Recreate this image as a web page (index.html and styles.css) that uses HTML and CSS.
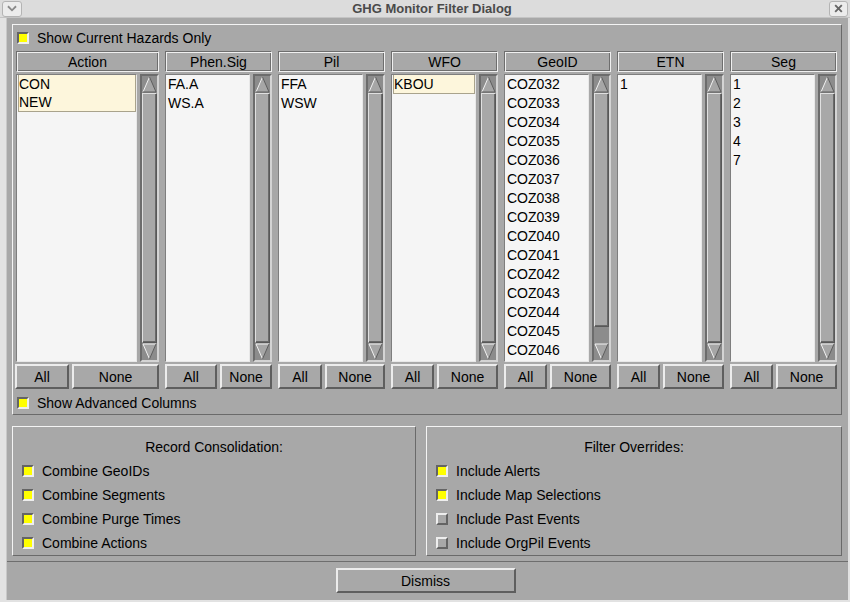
FILE: index.html
```html
<!DOCTYPE html>
<html>
<head>
<meta charset="utf-8">
<title>GHG Monitor Filter Dialog</title>
<link rel="stylesheet" href="styles.css">
</head>
<body>
<div class="win">
  <div class="titlebar">
    <div class="tbtn tleft"><svg width="20" height="15" viewBox="0 0 20 15"><polyline points="5.5,5 10,9.5 14.5,5" fill="none" stroke="#8a8a8a" stroke-width="2"/></svg></div>
    <div class="title">GHG Monitor Filter Dialog</div>
    <div class="tbtn tright"><svg width="18" height="15" viewBox="0 0 18 15"><path d="M5.5 4 L12.5 11 M12.5 4 L5.5 11" stroke="#666" stroke-width="2"/></svg></div>
  </div>
  <div class="body">
    <div class="main">
      <div class="frame topframe">
        <div class="chk"><span class="box on"></span><span>Show Current Hazards Only</span></div>
        <div class="cols">
          <div class="col wide">
            <div class="hdr">Action</div>
            <div class="lw">
              <div class="list">
                <div class="sel"><div class="row">CON</div><div class="row">NEW</div></div>
              </div>
              <div class="sb">
                <svg class="ar" width="15" height="17" viewBox="0 0 15 17"><polygon points="1,16 7.5,1 14,16" fill="#a6a6a6"/><line x1="1" y1="16" x2="7.5" y2="1" stroke="#f2f2f2"/><line x1="7.5" y1="1" x2="14" y2="16" stroke="#5e5e5e"/><line x1="1" y1="16" x2="14" y2="16" stroke="#5e5e5e"/></svg>
                <div class="thumb"></div>
                <svg class="ar" width="15" height="17" viewBox="0 0 15 17"><polygon points="1,1 14,1 7.5,16" fill="#a6a6a6"/><line x1="1" y1="1" x2="14" y2="1" stroke="#f2f2f2"/><line x1="1" y1="1" x2="7.5" y2="16" stroke="#f2f2f2"/><line x1="14" y1="1" x2="7.5" y2="16" stroke="#5e5e5e"/></svg>
              </div>
            </div>
            <div class="btns b1"><button class="btn">All</button><button class="btn">None</button></div>
          </div>
          <div class="col">
            <div class="hdr">Phen.Sig</div>
            <div class="lw">
              <div class="list"><div class="row">FA.A</div><div class="row">WS.A</div></div>
              <div class="sb">
                <svg class="ar" width="15" height="17" viewBox="0 0 15 17"><polygon points="1,16 7.5,1 14,16" fill="#a6a6a6"/><line x1="1" y1="16" x2="7.5" y2="1" stroke="#f2f2f2"/><line x1="7.5" y1="1" x2="14" y2="16" stroke="#5e5e5e"/><line x1="1" y1="16" x2="14" y2="16" stroke="#5e5e5e"/></svg>
                <div class="thumb"></div>
                <svg class="ar" width="15" height="17" viewBox="0 0 15 17"><polygon points="1,1 14,1 7.5,16" fill="#a6a6a6"/><line x1="1" y1="1" x2="14" y2="1" stroke="#f2f2f2"/><line x1="1" y1="1" x2="7.5" y2="16" stroke="#f2f2f2"/><line x1="14" y1="1" x2="7.5" y2="16" stroke="#5e5e5e"/></svg>
              </div>
            </div>
            <div class="btns b2"><button class="btn">All</button><button class="btn">None</button></div>
          </div>
          <div class="col">
            <div class="hdr">Pil</div>
            <div class="lw">
              <div class="list"><div class="row">FFA</div><div class="row">WSW</div></div>
              <div class="sb">
                <svg class="ar" width="15" height="17" viewBox="0 0 15 17"><polygon points="1,16 7.5,1 14,16" fill="#a6a6a6"/><line x1="1" y1="16" x2="7.5" y2="1" stroke="#f2f2f2"/><line x1="7.5" y1="1" x2="14" y2="16" stroke="#5e5e5e"/><line x1="1" y1="16" x2="14" y2="16" stroke="#5e5e5e"/></svg>
                <div class="thumb"></div>
                <svg class="ar" width="15" height="17" viewBox="0 0 15 17"><polygon points="1,1 14,1 7.5,16" fill="#a6a6a6"/><line x1="1" y1="1" x2="14" y2="1" stroke="#f2f2f2"/><line x1="1" y1="1" x2="7.5" y2="16" stroke="#f2f2f2"/><line x1="14" y1="1" x2="7.5" y2="16" stroke="#5e5e5e"/></svg>
              </div>
            </div>
            <div class="btns b3"><button class="btn">All</button><button class="btn">None</button></div>
          </div>
          <div class="col">
            <div class="hdr">WFO</div>
            <div class="lw">
              <div class="list"><div class="sel"><div class="row">KBOU</div></div></div>
              <div class="sb">
                <svg class="ar" width="15" height="17" viewBox="0 0 15 17"><polygon points="1,16 7.5,1 14,16" fill="#a6a6a6"/><line x1="1" y1="16" x2="7.5" y2="1" stroke="#f2f2f2"/><line x1="7.5" y1="1" x2="14" y2="16" stroke="#5e5e5e"/><line x1="1" y1="16" x2="14" y2="16" stroke="#5e5e5e"/></svg>
                <div class="thumb"></div>
                <svg class="ar" width="15" height="17" viewBox="0 0 15 17"><polygon points="1,1 14,1 7.5,16" fill="#a6a6a6"/><line x1="1" y1="1" x2="14" y2="1" stroke="#f2f2f2"/><line x1="1" y1="1" x2="7.5" y2="16" stroke="#f2f2f2"/><line x1="14" y1="1" x2="7.5" y2="16" stroke="#5e5e5e"/></svg>
              </div>
            </div>
            <div class="btns b4"><button class="btn">All</button><button class="btn">None</button></div>
          </div>
          <div class="col">
            <div class="hdr">GeoID</div>
            <div class="lw">
              <div class="list">
                <div class="row">COZ032</div><div class="row">COZ033</div><div class="row">COZ034</div>
                <div class="row">COZ035</div><div class="row">COZ036</div><div class="row">COZ037</div>
                <div class="row">COZ038</div><div class="row">COZ039</div><div class="row">COZ040</div>
                <div class="row">COZ041</div><div class="row">COZ042</div><div class="row">COZ043</div>
                <div class="row">COZ044</div><div class="row">COZ045</div><div class="row">COZ046</div>
              </div>
              <div class="sb">
                <svg class="ar" width="15" height="17" viewBox="0 0 15 17"><polygon points="1,16 7.5,1 14,16" fill="#a6a6a6"/><line x1="1" y1="16" x2="7.5" y2="1" stroke="#f2f2f2"/><line x1="7.5" y1="1" x2="14" y2="16" stroke="#5e5e5e"/><line x1="1" y1="16" x2="14" y2="16" stroke="#5e5e5e"/></svg>
                <div class="thumb part"></div>
                <svg class="ar" width="15" height="17" viewBox="0 0 15 17"><polygon points="1,1 14,1 7.5,16" fill="#a6a6a6"/><line x1="1" y1="1" x2="14" y2="1" stroke="#f2f2f2"/><line x1="1" y1="1" x2="7.5" y2="16" stroke="#f2f2f2"/><line x1="14" y1="1" x2="7.5" y2="16" stroke="#5e5e5e"/></svg>
              </div>
            </div>
            <div class="btns b4"><button class="btn">All</button><button class="btn">None</button></div>
          </div>
          <div class="col">
            <div class="hdr">ETN</div>
            <div class="lw">
              <div class="list"><div class="row">1</div></div>
              <div class="sb">
                <svg class="ar" width="15" height="17" viewBox="0 0 15 17"><polygon points="1,16 7.5,1 14,16" fill="#a6a6a6"/><line x1="1" y1="16" x2="7.5" y2="1" stroke="#f2f2f2"/><line x1="7.5" y1="1" x2="14" y2="16" stroke="#5e5e5e"/><line x1="1" y1="16" x2="14" y2="16" stroke="#5e5e5e"/></svg>
                <div class="thumb"></div>
                <svg class="ar" width="15" height="17" viewBox="0 0 15 17"><polygon points="1,1 14,1 7.5,16" fill="#a6a6a6"/><line x1="1" y1="1" x2="14" y2="1" stroke="#f2f2f2"/><line x1="1" y1="1" x2="7.5" y2="16" stroke="#f2f2f2"/><line x1="14" y1="1" x2="7.5" y2="16" stroke="#5e5e5e"/></svg>
              </div>
            </div>
            <div class="btns b4"><button class="btn">All</button><button class="btn">None</button></div>
          </div>
          <div class="col">
            <div class="hdr">Seg</div>
            <div class="lw">
              <div class="list"><div class="row">1</div><div class="row">2</div><div class="row">3</div><div class="row">4</div><div class="row">7</div></div>
              <div class="sb">
                <svg class="ar" width="15" height="17" viewBox="0 0 15 17"><polygon points="1,16 7.5,1 14,16" fill="#a6a6a6"/><line x1="1" y1="16" x2="7.5" y2="1" stroke="#f2f2f2"/><line x1="7.5" y1="1" x2="14" y2="16" stroke="#5e5e5e"/><line x1="1" y1="16" x2="14" y2="16" stroke="#5e5e5e"/></svg>
                <div class="thumb"></div>
                <svg class="ar" width="15" height="17" viewBox="0 0 15 17"><polygon points="1,1 14,1 7.5,16" fill="#a6a6a6"/><line x1="1" y1="1" x2="14" y2="1" stroke="#f2f2f2"/><line x1="1" y1="1" x2="7.5" y2="16" stroke="#f2f2f2"/><line x1="14" y1="1" x2="7.5" y2="16" stroke="#5e5e5e"/></svg>
              </div>
            </div>
            <div class="btns b4"><button class="btn">All</button><button class="btn">None</button></div>
          </div>
        </div>
        <div class="chk adv"><span class="box on"></span><span>Show Advanced Columns</span></div>
      </div>
      <div class="lower">
        <div class="frame group">
          <div class="gtitle">Record Consolidation:</div>
          <div class="chk grow"><span class="box on"></span><span>Combine GeoIDs</span></div>
          <div class="chk grow"><span class="box on"></span><span>Combine Segments</span></div>
          <div class="chk grow"><span class="box on"></span><span>Combine Purge Times</span></div>
          <div class="chk grow"><span class="box on"></span><span>Combine Actions</span></div>
        </div>
        <div class="frame group">
          <div class="gtitle">Filter Overrides:</div>
          <div class="chk grow"><span class="box on"></span><span>Include Alerts</span></div>
          <div class="chk grow"><span class="box on"></span><span>Include Map Selections</span></div>
          <div class="chk grow"><span class="box off"></span><span>Include Past Events</span></div>
          <div class="chk grow"><span class="box off"></span><span>Include OrgPil Events</span></div>
        </div>
      </div>
    </div>
    <div class="footer"><button class="btn dismiss">Dismiss</button></div>
  </div>
</div>
</body>
</html>
```

FILE: styles.css
```css
html, body {
  margin: 0;
  padding: 0;
}
body {
  width: 850px;
  height: 602px;
  overflow: hidden;
  background: #e2e2e2;
  font-family: "Liberation Sans", Arial, sans-serif;
  font-size: 14px;
  color: #000;
}
.win {
  display: flex;
  flex-direction: column;
  height: 602px;
}
.titlebar {
  height: 18px;
  display: flex;
  align-items: center;
  background: #dcdcdc;
  border-bottom: 1px solid #c4c4c4;
  box-sizing: border-box;
}
.tbtn {
  height: 16px;
  box-sizing: border-box;
  border: 1px solid #b4b4b4;
  border-radius: 3px;
  background: #ececec;
  display: flex;
  align-items: center;
  justify-content: center;
}
.tleft { width: 20px; margin-left: 2px; }
.tright { width: 19px; margin-right: 2px; }
.title {
  flex: 1;
  text-align: center;
  font-weight: bold;
  font-size: 13px;
  color: #4a4a4a;
  padding-left: 13px;
}
.body {
  margin-left: 6px;
  margin-right: 2px;
  height: 582px;
  background: #a8a8a8;
  border-left: 1px solid #c8c8c8;
  display: flex;
  flex-direction: column;
}
.main {
  padding: 6px 6px 0 5px;
}
.frame {
  border: 1px solid;
  border-color: #f4f4f4 #6a6a6a #6a6a6a #f4f4f4;
}
.topframe {
  height: 391px;
  box-sizing: border-box;
  padding: 3px 0 1px 3px;
}
.chk {
  display: flex;
  align-items: center;
  gap: 8px;
  height: 20px;
}
.topframe > .chk { padding-left: 1px; }
.box {
  width: 8px;
  height: 8px;
  border: 2px solid;
  flex: none;
}
.box.on {
  border-color: #646464 #eeeeee #eeeeee #646464;
  background: #ffff00;
}
.box.off {
  border-color: #eeeeee #646464 #646464 #eeeeee;
  background: #a8a8a8;
}
.cols {
  display: flex;
  gap: 6px;
  margin-top: 3px;
}
.col {
  width: 107px;
  display: flex;
  flex-direction: column;
  gap: 2px;
}
.col.wide { width: 143px; }
.hdr {
  height: 21px;
  box-sizing: border-box;
  border: 1px solid;
  border-color: #6e6e6e #f0f0f0 #f0f0f0 #6e6e6e;
  box-shadow: inset 1px 1px 0 #f0f0f0, inset -1px -1px 0 #6e6e6e;
  display: flex;
  align-items: center;
  justify-content: center;
  line-height: 1;
}
.lw {
  height: 288px;
  display: flex;
  gap: 3px;
}
.list {
  flex: 1;
  background: #f5f5f5;
  border: 1px solid;
  border-color: #7e7e7e #e8e8e8 #e8e8e8 #7e7e7e;
  padding: 0 0 0 1px;
}
.row {
  height: 19px;
  line-height: 19px;
  padding-left: 1px;
  white-space: nowrap;
}
.sel {
  background: #fdf6dc;
  border: 1px solid #a9a38c;
  border-top: none;
}
.sel .row {
  padding-left: 0;
  height: 18px;
  line-height: 19px;
}
.sb {
  width: 15px;
  box-sizing: content-box;
  border: 2px solid;
  border-color: #6c6c6c #d4d4d4 #d4d4d4 #6c6c6c;
  background: #8c8c8c;
  display: flex;
  flex-direction: column;
}
.ar {
  display: block;
  flex: none;
}
.thumb {
  flex: 1;
  background: #a8a8a8;
  border: 1px solid;
  border-color: #e0e0e0 #585858 #585858 #e0e0e0;
  box-shadow: inset -1px -1px 0 #6a6a6a;
}
.thumb.part { margin-bottom: 16px; }
.btns {
  display: grid;
  gap: 3px;
  height: 25px;
}
.b1 { grid-template-columns: 54px 87px; margin-left: -1px; }
.b2 { grid-template-columns: 52px 52px; }
.b3 { grid-template-columns: 44px 60px; }
.b4 { grid-template-columns: 43px 61px; }
.btn {
  margin: 0;
  padding: 0;
  box-sizing: border-box;
  font-family: "Liberation Sans", Arial, sans-serif;
  font-size: 14px;
  color: #000;
  background: #a8a8a8;
  border: 2px solid;
  border-color: #ececec #5e5e5e #5e5e5e #ececec;
  height: 25px;
}
.adv {
  margin-top: 4px;
  padding-left: 1px;
}
.lower {
  display: grid;
  grid-template-columns: 404px 1fr;
  gap: 10px;
  margin-top: 11px;
}
.group {
  height: 130px;
  box-sizing: border-box;
  padding: 8px 0 0 9px;
}
.gtitle {
  height: 24px;
  line-height: 24px;
  text-align: center;
  padding-right: 9px;
}
.grow { height: 24px; }
.footer {
  margin-top: 5px;
  border-top: 1px solid #6e6e6e;
  display: flex;
  justify-content: center;
  padding-top: 6px;
  padding-right: 4px;
}
.dismiss {
  width: 180px;
  height: 25px;
}
```
